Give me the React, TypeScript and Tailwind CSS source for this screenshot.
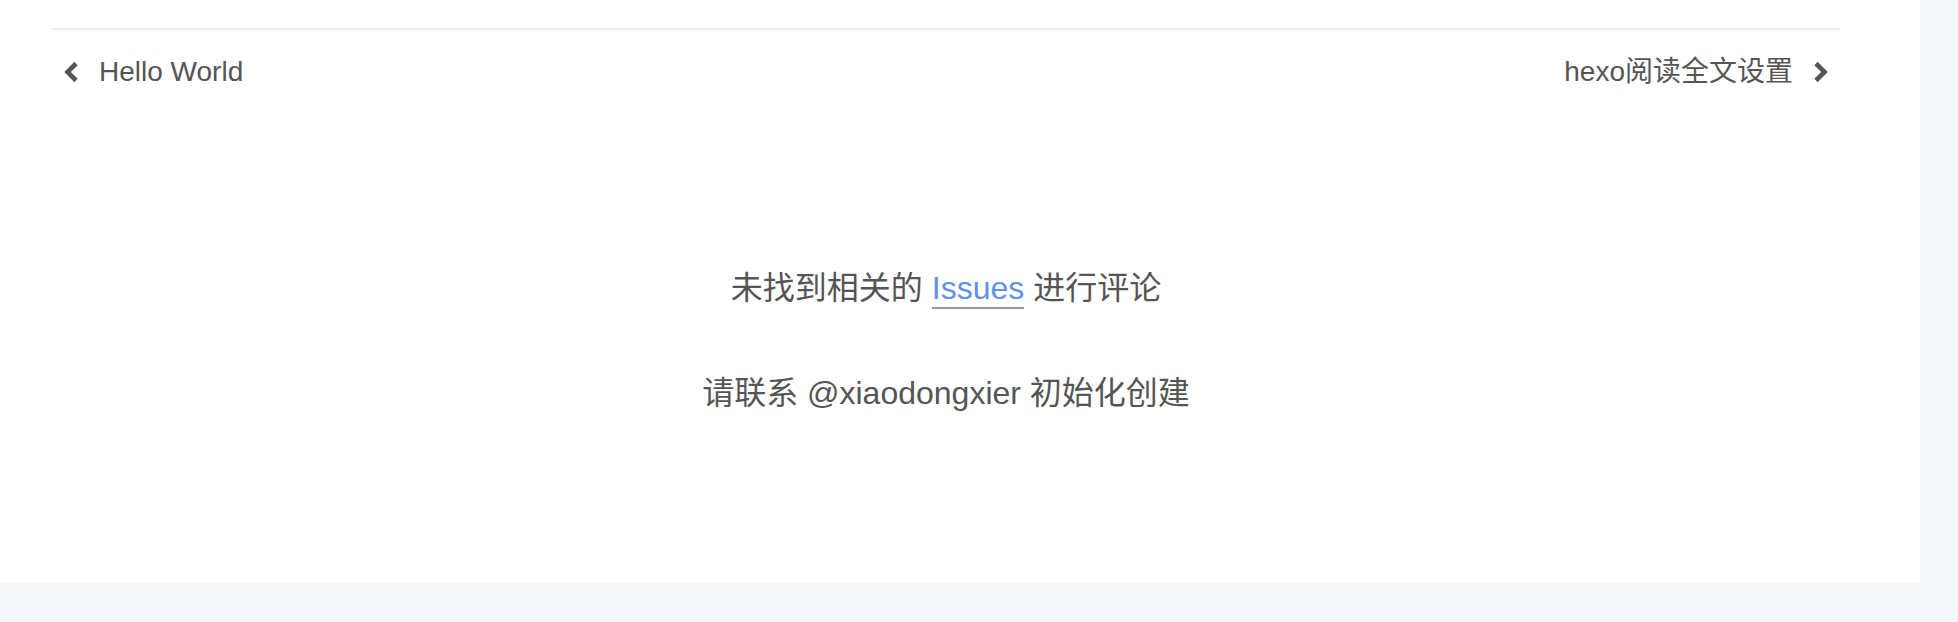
import React from 'react'

function Chevron({ dir }: { dir: 'left' | 'right' }) {
  const d = dir === 'left' ? 'M13 2.5 L4.5 11 L13 19.5' : 'M3 2.5 L11.5 11 L3 19.5'
  return (
    <svg width="16" height="22" viewBox="0 0 16 22" className="shrink-0">
      <path d={d} fill="none" stroke="#555555" strokeWidth="4.6" strokeLinejoin="miter" strokeLinecap="butt" />
    </svg>
  )
}

export default function App() {
  return (
    <div
      className="h-[622px] w-full bg-[#f5f6f8] text-[#555555]"
      style={{ fontFamily: '"Liberation Sans", "Noto Sans CJK SC", sans-serif' }}
    >
      <div className="h-[582px] w-[1920px] bg-white pl-[52px] pr-[80px] pt-[28px]">
        <div className="h-[2px] bg-[#eeeeee]" />
        <div className="mt-[22px] flex h-10 items-center justify-between text-[28px] leading-10">
          <a className="flex items-center gap-[20px] pl-[11px]">
            <Chevron dir="left" />
            <span>Hello World</span>
          </a>
          <a className="flex items-center gap-[20px] pr-[11px]">
            <span>hexo阅读全文设置</span>
            <Chevron dir="right" />
          </a>
        </div>
        <div className="mt-[176px] flex flex-col items-center text-[32px] leading-10">
          <p>
            未找到相关的{' '}
            <a className="border-b-2 border-[#999999] pb-[1px] text-[#6190e8]">Issues</a>{' '}
            进行评论
          </p>
          <p className="mt-[65px]">请联系 @xiaodongxier 初始化创建</p>
        </div>
      </div>
    </div>
  )
}
